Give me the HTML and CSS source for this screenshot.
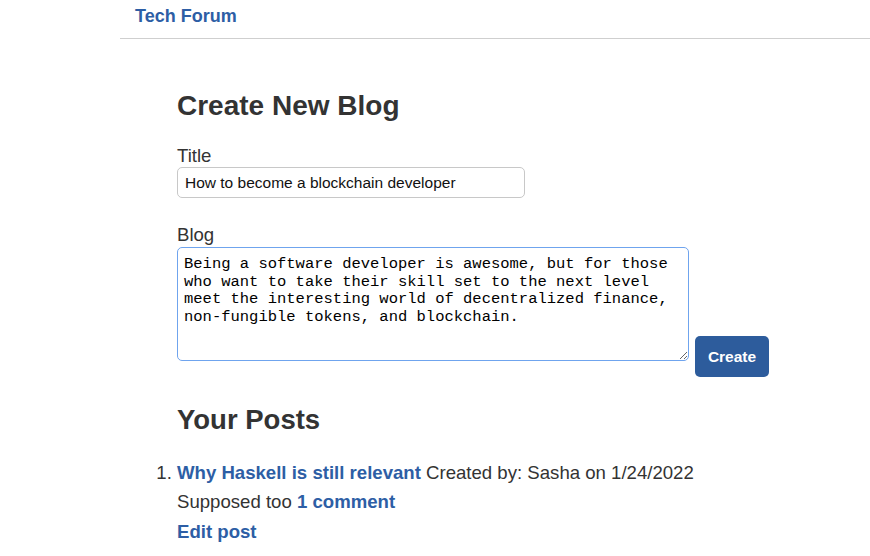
FILE: index.html
```html
<!DOCTYPE html>
<html lang="en">
<head>
<meta charset="utf-8">
<title>Tech Forum</title>
<link rel="stylesheet" href="styles.css">
</head>
<body>
<header class="site-header">
  <a class="brand" href="#">Tech Forum</a>
</header>
<main class="main">
  <h1 class="page-title">Create New Blog</h1>
  <form class="blog-form">
    <label class="field-label" for="title">Title</label>
    <input class="title-input" id="title" type="text" value="How to become a blockchain developer">
    <label class="field-label blog-label" for="blog">Blog</label>
    <div class="blog-row">
      <textarea class="blog-input" id="blog">Being a software developer is awesome, but for those who want to take their skill set to the next level meet the interesting world of decentralized finance, non-fungible tokens, and blockchain.</textarea>
      <button class="create-btn" type="button">Create</button>
    </div>
  </form>
  <h2 class="section-title">Your Posts</h2>
  <ol class="post-list">
    <li class="post-item">
      <div class="post-line"><a class="link" href="#">Why Haskell is still relevant</a> Created by: Sasha on 1/24/2022</div>
      <div class="post-line">Supposed too <a class="link" href="#">1 comment</a></div>
      <div class="post-line post-edit"><a class="link" href="#">Edit post</a></div>
    </li>
  </ol>
</main>
</body>
</html>
```
FILE: styles.css
```css
* { box-sizing: border-box; }
html, body { margin: 0; padding: 0; background: #fff; }
body {
  font-family: "Liberation Sans", Arial, sans-serif;
  font-size: 18.6px;
  color: #333;
}
.site-header {
  margin-left: 120px;
  padding: 5px 0 11px 15px;
  border-bottom: 1px solid #cfcfcf;
  line-height: 22px;
}
.brand {
  font-size: 18px;
  font-weight: bold;
  color: #2d5ea5;
  text-decoration: none;
}
.main {
  margin-left: 177px;
}
.page-title {
  margin: 51px 0 0;
  font-size: 28px;
  line-height: 32px;
  font-weight: bold;
  color: #333;
}
.blog-form {
  display: flex;
  flex-direction: column;
  align-items: flex-start;
  margin-top: 23px;
}
.field-label {
  display: block;
  font-size: 18.6px;
  line-height: 22px;
  color: #333;
}
.title-input {
  margin-top: 0;
  width: 348px;
  height: 31px;
  padding: 0 7px;
  border: 1px solid #c8c8c8;
  border-radius: 5px;
  font-family: "Liberation Sans", Arial, sans-serif;
  font-size: 15.5px;
  color: #111;
  background: #fff;
}
.blog-label {
  margin-top: 26px;
}
.blog-row {
  display: flex;
  align-items: flex-start;
  gap: 6px;
  margin-top: 1px;
}
.blog-input {
  width: 512px;
  height: 114px;
  padding: 8px 6px 6px;
  border: 1px solid #6fa4ee;
  border-radius: 5px;
  font-family: "Liberation Mono", "Courier New", monospace;
  font-size: 15.5px;
  line-height: 17.5px;
  color: #000;
  background: #fff;
  outline: none;
  resize: both;
}
.create-btn {
  margin-top: 89px;
  width: 74px;
  height: 41px;
  padding: 0;
  border: none;
  border-radius: 5px;
  background: #2d5c9c;
  color: #fff;
  font-family: "Liberation Sans", Arial, sans-serif;
  font-size: 15.5px;
  font-weight: bold;
}
.section-title {
  margin: 27px 0 0;
  font-size: 27.5px;
  line-height: 31px;
  font-weight: bold;
  color: #333;
}
.post-list {
  margin: 24px 0 0;
  padding: 0;
  list-style-position: outside;
}
.post-item {
  line-height: 28.5px;
}
.post-edit {
  margin-top: 2px;
}
.link {
  color: #2d5ea5;
  font-weight: bold;
  text-decoration: none;
}
```
